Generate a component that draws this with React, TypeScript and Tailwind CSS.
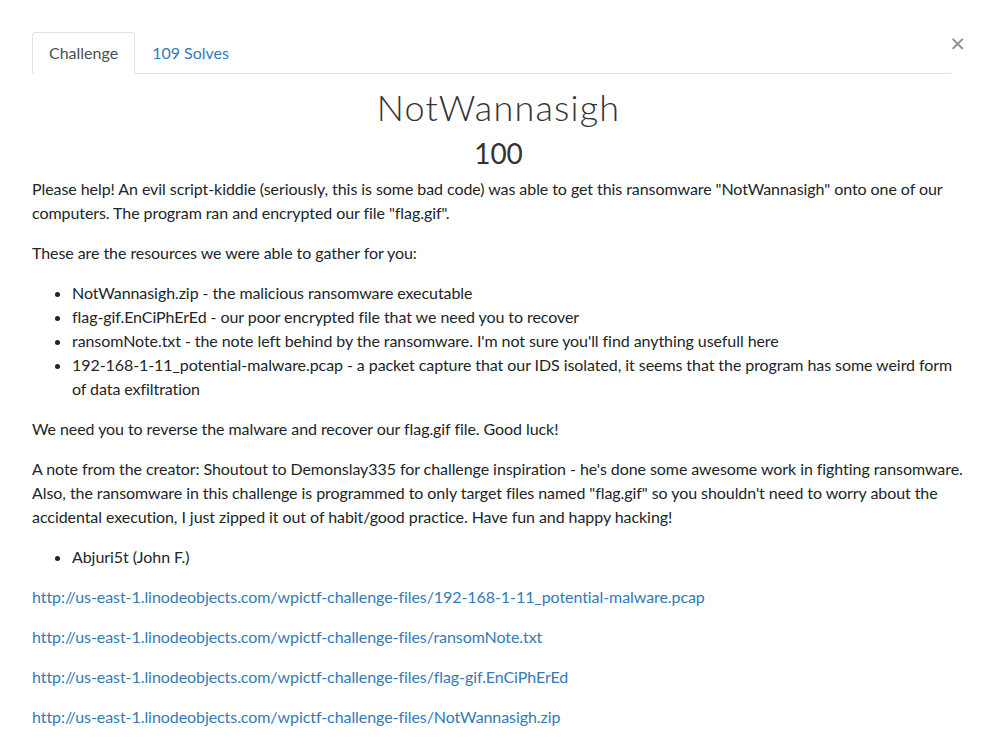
import { useState } from "react";

const files = [
  "192-168-1-11_potential-malware.pcap",
  "ransomNote.txt",
  "flag-gif.EnCiPhErEd",
  "NotWannasigh.zip",
];

export default function App() {
  const [tab, setTab] = useState("challenge");

  return (
    <div className="relative min-h-screen bg-white text-[#212529] font-['Lato','Open_Sans',sans-serif] text-base leading-6 tracking-[-0.07px]">
      <button className="absolute top-[31px] right-[31px] text-[20px] leading-6 text-[#888] font-['DejaVu_Sans',sans-serif]">
        ×
      </button>

      <div className="ml-8 w-[933px] pt-8">
        {/* Tabs */}
        <ul className="flex w-[919px] border-b border-[#dee2e6]">
          <li className="-mb-px">
            <button
              onClick={() => setTab("challenge")}
              className="block px-4 py-2 rounded-t border border-[#dee2e6] border-b-white bg-white text-[#495057] tracking-normal"
            >
              Challenge
            </button>
          </li>
          <li className="-mb-px">
            <button
              onClick={() => setTab("solves")}
              className="block px-4 py-2 border border-transparent text-[#337ab7] tracking-normal"
            >
              109 Solves
            </button>
          </li>
        </ul>

        {tab === "challenge" && (
          <div>
            <h2 className="mt-[12px] text-center text-[36px] leading-[43px] font-light tracking-[1.2px] text-[#333]">
              NotWannasigh
            </h2>
            <h3 className="mt-[7px] text-center text-[28px] leading-[34px] font-normal text-[#333]">100</h3>

            <div className="mt-[7px]">
              <p className="mb-4">
                Please help! An evil script-kiddie (seriously, this is some bad code) was able to get this ransomware
                "NotWannasigh" onto one of our computers. The program ran and encrypted our file "flag.gif".
              </p>
              <p className="mb-4">These are the resources we were able to gather for you:</p>
              <ul className="mb-4 list-disc pl-10">
                <li>NotWannasigh.zip - the malicious ransomware executable</li>
                <li>flag-gif.EnCiPhErEd - our poor encrypted file that we need you to recover</li>
                <li>ransomNote.txt - the note left behind by the ransomware. I'm not sure you'll find anything usefull here</li>
                <li>
                  192-168-1-11_potential-malware.pcap - a packet capture that our IDS isolated, it seems that the program
                  has some weird form of data exfiltration
                </li>
              </ul>
              <p className="mb-4">We need you to reverse the malware and recover our flag.gif file. Good luck!</p>
              <p className="mb-4">
                A note from the creator: Shoutout to Demonslay335 for challenge inspiration - he's done some awesome work in
                fighting ransomware. Also, the ransomware in this challenge is programmed to only target files named
                "flag.gif" so you shouldn't need to worry about the accidental execution, I just zipped it out of
                habit/good practice. Have fun and happy hacking!
              </p>
              <ul className="mb-4 list-disc pl-10">
                <li>Abjuri5t (John F.)</li>
              </ul>
              {files.map((f) => (
                <p key={f} className="mb-4">
                  <a href="#" className="text-[#337ab7] hover:underline">
                    http://us-east-1.linodeobjects.com/wpictf-challenge-files/{f}
                  </a>
                </p>
              ))}
            </div>
          </div>
        )}
      </div>
    </div>
  );
}
